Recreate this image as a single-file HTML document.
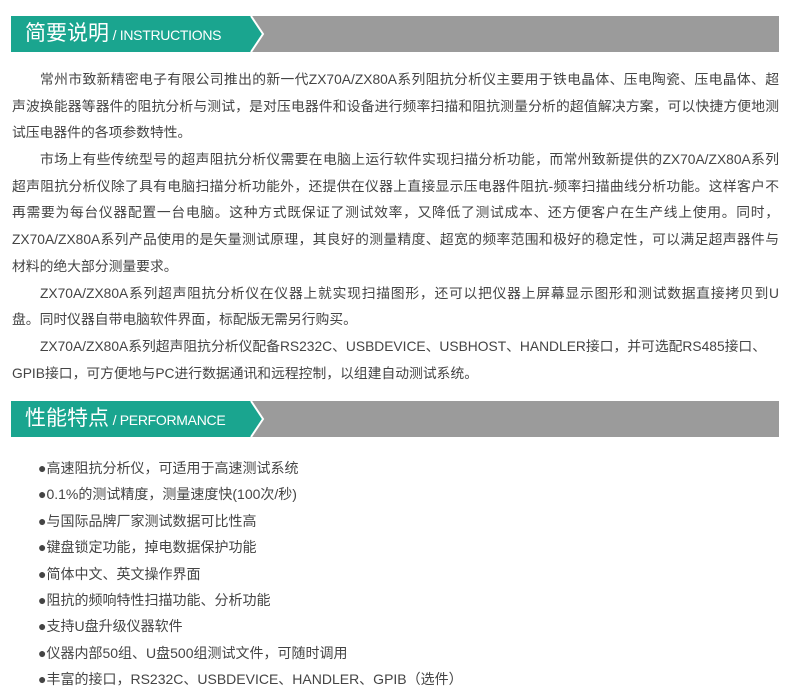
<!DOCTYPE html>
<html><head><meta charset="utf-8"><style>
body{margin:0;background:#fff;width:790px;height:689px;overflow:hidden;font-family:"Liberation Sans","Noto Sans CJK SC",sans-serif;color:#444;}
.bar{position:absolute;left:11px;width:768px;height:36px;background:#9b9b9b;}
.bar .t{position:absolute;left:0;top:0;height:36px;width:236px;background:#1aa58f;}
.bar svg{position:absolute;left:230px;top:0}
.bar .lbl{position:absolute;left:14px;top:0;line-height:36px;color:#fff;white-space:nowrap}
.bar .lbl b{font-weight:normal;font-size:21px}
.bar .lbl span{font-size:14px;letter-spacing:-0.3px}
.p{position:absolute;left:12px;width:767px;font-size:13.8px;}
.p div{height:26.7px;line-height:26.7px;text-align:justify;text-align-last:justify;white-space:nowrap}
.p div.l{text-align-last:left}
.p div.i{padding-left:28px}
.li{position:absolute;left:38px;font-size:14px}
.li div{height:26.4px;line-height:26.4px;white-space:nowrap}
</style></head><body>
<div class="bar" style="top:16px"><div class="t"></div>
<svg width="26" height="36"><polygon points="0,0 10,0 22,18 10,36 0,36" fill="#1aa58f"/><polyline points="10,0 22,18 10,36" fill="none" stroke="#fff" stroke-width="2"/></svg>
<div class="lbl"><b>简要说明</b><span> / INSTRUCTIONS</span></div></div>
<div class="p" style="top:67px">
<div class="i">常州市致新精密电子有限公司推出的新一代ZX70A/ZX80A系列阻抗分析仪主要用于铁电晶体、压电陶瓷、压电晶体、超</div>
<div>声波换能器等器件的阻抗分析与测试，是对压电器件和设备进行频率扫描和阻抗测量分析的超值解决方案，可以快捷方便地测</div>
<div class="l">试压电器件的各项参数特性。</div>
<div class="i">市场上有些传统型号的超声阻抗分析仪需要在电脑上运行软件实现扫描分析功能，而常州致新提供的ZX70A/ZX80A系列</div>
<div>超声阻抗分析仪除了具有电脑扫描分析功能外，还提供在仪器上直接显示压电器件阻抗-频率扫描曲线分析功能。这样客户不</div>
<div>再需要为每台仪器配置一台电脑。这种方式既保证了测试效率，又降低了测试成本、还方便客户在生产线上使用。同时，</div>
<div>ZX70A/ZX80A系列产品使用的是矢量测试原理，其良好的测量精度、超宽的频率范围和极好的稳定性，可以满足超声器件与</div>
<div class="l">材料的绝大部分测量要求。</div>
<div class="i">ZX70A/ZX80A系列超声阻抗分析仪在仪器上就实现扫描图形，还可以把仪器上屏幕显示图形和测试数据直接拷贝到U</div>
<div class="l">盘。同时仪器自带电脑软件界面，标配版无需另行购买。</div>
<div class="i l">ZX70A/ZX80A系列超声阻抗分析仪配备RS232C、USBDEVICE、USBHOST、HANDLER接口，并可选配RS485接口、</div>
<div class="l">GPIB接口，可方便地与PC进行数据通讯和远程控制，以组建自动测试系统。</div>
</div>
<div class="bar" style="top:401px"><div class="t"></div>
<svg width="26" height="36"><polygon points="0,0 10,0 22,18 10,36 0,36" fill="#1aa58f"/><polyline points="10,0 22,18 10,36" fill="none" stroke="#fff" stroke-width="2"/></svg>
<div class="lbl"><b>性能特点</b><span> / PERFORMANCE</span></div></div>
<div class="li" style="top:455px">
<div>●高速阻抗分析仪，可适用于高速测试系统</div>
<div>●0.1%的测试精度，测量速度快(100次/秒)</div>
<div>●与国际品牌厂家测试数据可比性高</div>
<div>●键盘锁定功能，掉电数据保护功能</div>
<div>●简体中文、英文操作界面</div>
<div>●阻抗的频响特性扫描功能、分析功能</div>
<div>●支持U盘升级仪器软件</div>
<div>●仪器内部50组、U盘500组测试文件，可随时调用</div>
<div>●丰富的接口，RS232C、USBDEVICE、HANDLER、GPIB（选件）</div>
</div>
</body></html>
